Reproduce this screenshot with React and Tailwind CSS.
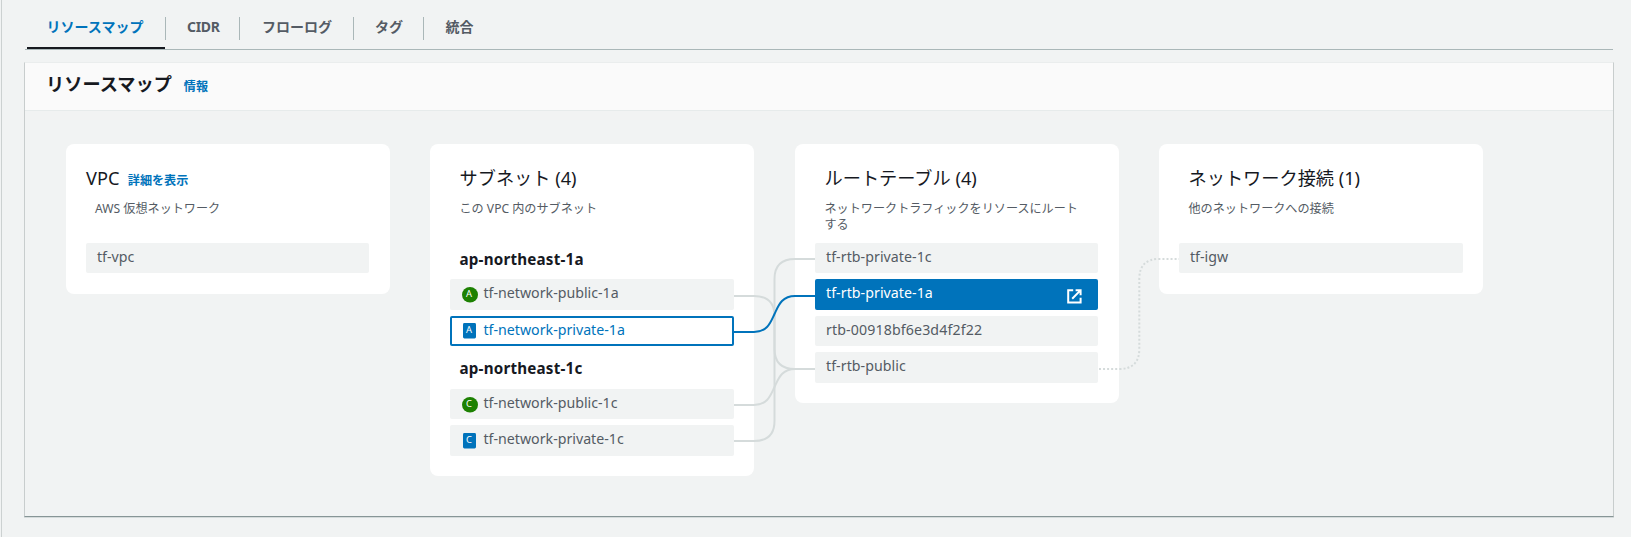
const tabs = [
  { label: "リソースマップ", cls: "w-[138px] pl-[19.5px] text-[#0073bb]", active: true },
  { label: "CIDR", cls: "w-[73px] pl-[21px] tracking-[-0.35px]" },
  { label: "フローログ", cls: "w-[113px] pl-[22px]" },
  { label: "タグ", cls: "w-[69px] pl-[21px]" },
  { label: "統合", cls: "w-[70px] pl-[21.5px]" },
];

function Tab({ label, cls, active, last }) {
  return (
    <div className="relative flex h-[49px] shrink-0 items-start">
      <button
        className={"h-[37px] pt-[17px] text-left text-[14px] leading-[20px] font-bold whitespace-nowrap " + cls}
      >
        {label}
      </button>
      {!last && <span className="mt-[17px] h-[23px] w-px bg-[#aab7b8]" />}
      {active && <span className="absolute bottom-0 left-0 h-[2px] w-[138px] bg-[#16191f]" />}
    </div>
  );
}

function Card({ className, children }) {
  return (
    <section className={"w-[324px] shrink-0 rounded-[8px] bg-white px-[20px] pb-[20.4px] " + className}>
      {children}
    </section>
  );
}

function Heading({ title, count, description }) {
  return (
    <header className="h-[99px] pt-[21px] pl-[9.5px]">
      <h3 className="text-[18.2px] leading-[26px] whitespace-nowrap text-[#16191f]">
        {title} <span>{count}</span>
      </h3>
      <p className="mt-[10px] w-[256px] text-[12.12px] leading-[16px] text-[#545b64]">{description}</p>
    </header>
  );
}

function Badge({ letter, kind }) {
  return (
    <svg className="mr-[5.5px] ml-[1px] h-[17px] w-[16px] shrink-0" viewBox="0 0 16 17">
      {kind === "public" ? (
        <ellipse cx="8" cy="8.7" rx="8" ry="7.8" fill="#1d8102" />
      ) : (
        <rect x="1" y="1" width="13" height="15.4" rx="1.4" fill="#0073bb" />
      )}
      <text x="6.9" y="10.6" textAnchor="middle" fontSize="9.4" fill="#fff">
        {letter}
      </text>
    </svg>
  );
}

function Item({ name, badge, kind, state, className = "" }) {
  const tone =
    state === "outlined"
      ? "bg-white text-[#0073bb] ring-2 ring-inset ring-[#0073bb]"
      : state === "filled"
        ? "bg-[#0073bb] text-white"
        : "bg-[#f1f3f3] text-[#545b64]";
  return (
    <li className={"flex h-[30.4px] items-center rounded-[2px] pl-[11px] text-[14.2px] " + tone + " " + className}>
      {badge && <Badge letter={badge} kind={kind} />}
      <span className="mb-[2.4px] leading-[20px] whitespace-nowrap">{name}</span>
      {state === "filled" && (
        <svg className="mt-[3px] mr-[16px] ml-auto h-[15px] w-[15px]" viewBox="0 0 15 15" fill="none" stroke="#fff" strokeWidth="2">
          <path d="M6.2 1.2H1.2V13.6H13.6V8.8" />
          <path d="M8.6 1.2H13.6V6.2M13.4 1.4L5.2 9.8" />
        </svg>
      )}
    </li>
  );
}

function Connectors() {
  return (
    <svg
      className="pointer-events-none absolute top-0 left-0 h-[405px] w-[1588px]"
      viewBox="25 111 1588 405"
      fill="none"
      strokeWidth="2"
    >
      <g stroke="#d5dbdb">
        <path d="M734 441H754Q774.5 441 774.5 421V279Q774.5 259 795 259H815" />
        <path d="M734 296H754Q774.5 296 774.5 316V349Q774.5 369 795 369H815" />
        <path d="M734 405H754C768 405 771 394 774.5 387S781 369 795 369" />
        <path d="M1099 369H1119Q1139.3 369 1139.3 349V279Q1139.3 259 1159 259H1179" strokeDasharray="2 2.05" />
      </g>
      <path stroke="#0073bb" d="M734 332H754C768 332 771 321 774.5 314S781 296 795 296H815" />
    </svg>
  );
}

export default function App() {
  return (
    <div className="flex h-[537px] w-[1631px] overflow-hidden bg-[#f1f3f3] font-['Noto_Sans','Noto_Sans_CJK_JP',sans-serif] text-[#545b64]">
      <div className="ml-[1px] w-px shrink-0 bg-[#ccd1d1]" />
      <main className="ml-[22px] w-[1590px] shrink-0">
        <nav className="ml-[1px] flex h-[50px] w-[1588px] border-b border-[#aab7b8] pl-[2px]">
          {tabs.map((t, i) => (
            <Tab key={t.label} {...t} last={i === tabs.length - 1} />
          ))}
        </nav>
        <section className="mt-[12px] h-[455px] border border-t-[#eaeded] border-r-[#c8cdcd] border-b-[#879596] border-l-[#c8cdcd] shadow-[0_1px_0_#d5dbdb]">
          <header className="flex h-[48px] items-center border-b border-[#e6ebeb] bg-[#fafafa] pl-[21px]">
            <h2 className="mb-[5px] text-[18.2px] leading-[26px] font-bold text-[#16191f]">リソースマップ</h2>
            <a className="ml-[12px] text-[12.1px] leading-[20px] font-bold text-[#0073bb]">情報</a>
          </header>
          <div className="relative flex items-start pt-[33px] pl-[41px]">
            <Card className="mr-[40px]">
              <header className="h-[99px] pt-[21px]">
                <div className="flex items-baseline">
                  <h3 className="text-[18.2px] leading-[26px] text-[#16191f]">VPC</h3>
                  <a className="ml-[8.4px] text-[12.1px] leading-[20px] font-bold text-[#0073bb]">詳細を表示</a>
                </div>
                <p className="mt-[10px] pl-[9px] text-[12.12px] leading-[16px]">AWS 仮想ネットワーク</p>
              </header>
              <ul className="w-[283px]">
                <Item name="tf-vpc" />
              </ul>
            </Card>
            <Card className="mr-[41px]">
              <Heading title="サブネット" count="(4)" description="この VPC 内のサブネット" />
              <h4 className="h-[36.4px] pt-[5px] pl-[9.5px] text-[15.2px] leading-[22px] font-bold tracking-[0.2px] text-[#16191f]">ap-northeast-1a</h4>
              <ul className="flex flex-col gap-[6px]">
                <Item name="tf-network-public-1a" badge="A" kind="public" />
                <Item name="tf-network-private-1a" badge="A" kind="private" state="outlined" />
              </ul>
              <h4 className="h-[42.8px] pt-[11px] pl-[9.5px] text-[15.2px] leading-[22px] font-bold tracking-[0.2px] text-[#16191f]">ap-northeast-1c</h4>
              <ul className="flex flex-col gap-[6px]">
                <Item name="tf-network-public-1c" badge="C" kind="public" />
                <Item name="tf-network-private-1c" badge="C" kind="private" />
              </ul>
            </Card>
            <Card className="mr-[40px]">
              <Heading title="ルートテーブル" count="(4)" description="ネットワークトラフィックをリソースにルートする" />
              <ul className="flex w-[283px] flex-col gap-[6px]">
                <Item name="tf-rtb-private-1c" className="tracking-[0.05px]" />
                <Item name="tf-rtb-private-1a" state="filled" className="tracking-[0.05px]" />
                <Item name="rtb-00918bf6e3d4f2f22" className="tracking-[0.12px]" />
                <Item name="tf-rtb-public" className="tracking-[0.05px]" />
              </ul>
            </Card>
            <Card className="">
              <Heading title="ネットワーク接続" count="(1)" description="他のネットワークへの接続" />
              <ul>
                <Item name="tf-igw" />
              </ul>
            </Card>
            <Connectors />
          </div>
        </section>
      </main>
    </div>
  );
}
